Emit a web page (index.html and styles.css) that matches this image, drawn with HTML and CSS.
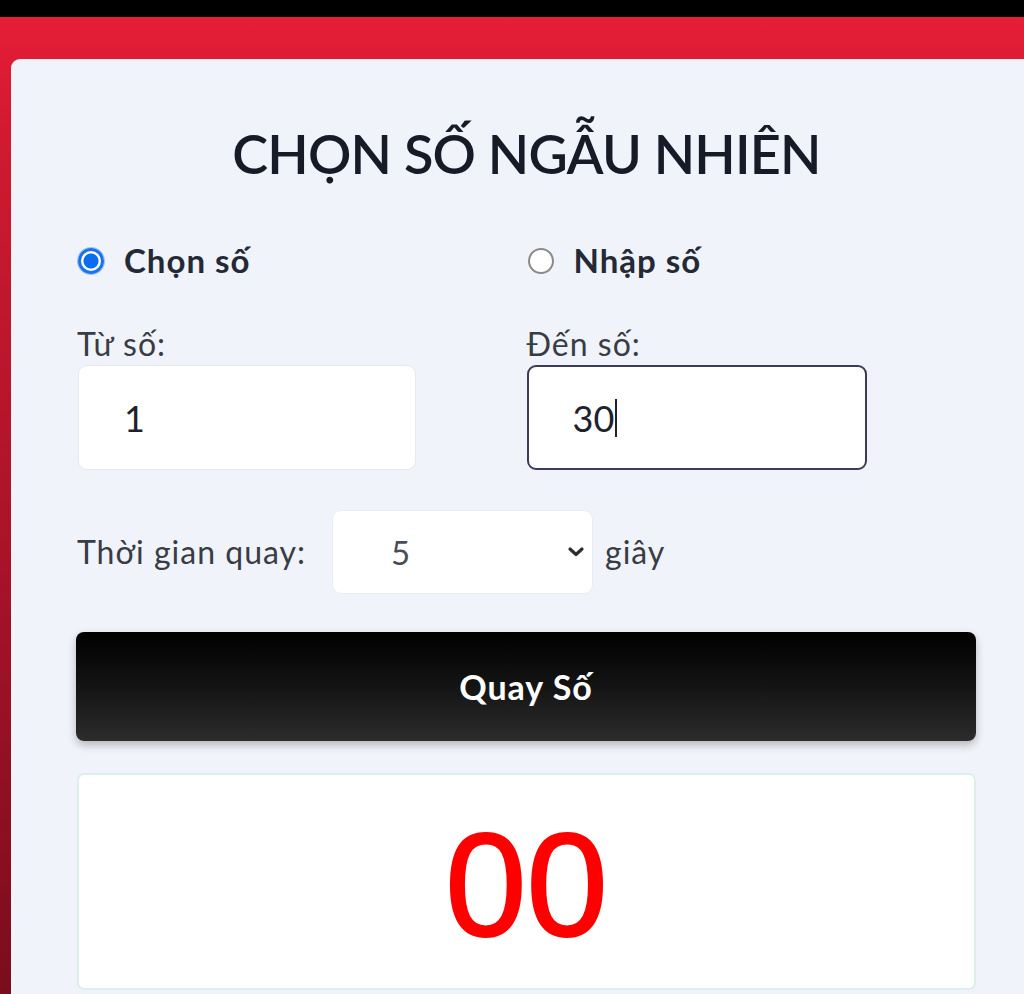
FILE: index.html
```html
<!DOCTYPE html>
<html lang="vi">
<head>
<meta charset="utf-8">
<title>Chọn số ngẫu nhiên</title>
<link rel="stylesheet" href="styles.css">
</head>
<body>
<div class="topbar"></div>
<div class="stage">
  <main class="card">
    <h1 class="title">CHỌN SỐ NGẪU NHIÊN</h1>
    <div class="grid">
      <label class="opt"><span class="radio checked"></span><span>Chọn số</span></label>
      <label class="opt"><span class="radio"></span><span>Nhập số</span></label>
      <div class="col">
        <div class="lbl">Từ số:</div>
        <div class="field">1</div>
      </div>
      <div class="col">
        <div class="lbl">Đến số:</div>
        <div class="field focused">30<span class="caret"></span></div>
      </div>
    </div>
    <div class="timerow">
      <span class="lbl">Thời gian quay:</span>
      <div class="select">
        <span>5</span>
        <svg class="chev" width="18" height="12" viewBox="0 0 18 12"><path d="M3 3l6 5.5 6-5.5" fill="none" stroke="#2e2e2e" stroke-width="3.2" stroke-linecap="round" stroke-linejoin="round"/></svg>
      </div>
      <span class="lbl">giây</span>
    </div>
    <button class="spin">Quay Số</button>
    <div class="result">00</div>
  </main>
</div>
</body>
</html>
```
FILE: styles.css
```css
html, body {
  margin: 0;
  padding: 0;
  overflow: hidden;
  height: 994px;
  background: #000;
}
body {
  font-family: Lato, "Noto Sans", sans-serif;
}
.topbar {
  height: 17px;
  background: #000;
}
.stage {
  height: 977px;
  padding: 42px 0 0 11px;
  box-sizing: border-box;
  background: linear-gradient(180deg, #e61d37 0%, #d01a30 12%, #a8132a 55%, #7a0d1c 100%);
  overflow: hidden;
}
.card {
  width: 1031px;
  height: 1000px;
  box-sizing: border-box;
  background: #f1f3fa;
  border-radius: 9px 0 0 0;
  padding: 62px 66px 0 66px;
}
.title {
  margin: 0;
  text-align: center;
  font-weight: 600;
  font-size: 54px;
  line-height: 65px;
  color: #161b27;
  letter-spacing: -0.8px;
}
.grid {
  display: grid;
  grid-template-columns: 1fr 1fr;
  margin-top: 56px;
  row-gap: 47px;
}
.opt {
  display: flex;
  align-items: center;
  gap: 20px;
  font-weight: 700;
  font-size: 33px;
  line-height: 37px;
  letter-spacing: 1px;
  color: #232a36;
  padding-left: 1px;
}
.radio {
  width: 26px;
  height: 26px;
  border-radius: 50%;
  box-sizing: border-box;
  border: 2px solid #8a8a8a;
  background: #fff;
}
.radio.checked {
  border: 3px solid #1a73e8;
  background: radial-gradient(circle, #0b6cf0 0 7px, #fff 8px);
  box-shadow: 0 0 0 1px #9cc3f5;
}
.col {
  display: flex;
  flex-direction: column;
}
.lbl {
  font-size: 32px;
  line-height: 36px;
  letter-spacing: 1px;
  color: #383c44;
}
.field {
  margin-top: 3px;
  width: 338px;
  height: 105px;
  box-sizing: border-box;
  background: #fff;
  border: 1px solid #e7e9f0;
  border-radius: 9px;
  padding-left: 45px;
  display: flex;
  align-items: center;
  font-size: 36px;
  color: #1d222c;
  margin-left: 1px;
}
.field.focused {
  width: 340px;
  border: 2px solid #3b3d58;
  padding-left: 44px;
  margin-left: 0;
}
.caret {
  width: 2px;
  height: 38px;
  background: #1d222c;
  margin-left: 1px;
}
.timerow {
  display: flex;
  align-items: center;
  margin-top: 40px;
}
.select {
  position: relative;
  width: 261px;
  height: 84px;
  box-sizing: border-box;
  margin: 0 12px 0 26px;
  background: #fff;
  border: 1px solid #eceef4;
  border-radius: 9px;
  display: flex;
  align-items: center;
  padding-left: 58px;
  font-size: 33px;
  color: #4a4d55;
}
.chev {
  position: absolute;
  right: 7px;
  top: 35px;
}
.spin {
  display: block;
  width: calc(100% + 1px);
  margin-left: -1px;
  height: 109px;
  margin-top: 38px;
  border: 0;
  border-radius: 8px;
  background: linear-gradient(180deg, #000 0%, #141414 50%, #2c2c2c 100%);
  box-shadow: 0 4px 8px rgba(0, 0, 0, 0.25);
  color: #fff;
  font-family: Lato, "Noto Sans", sans-serif;
  font-weight: 700;
  font-size: 34px;
  letter-spacing: 1px;
}
.result {
  margin-top: 32px;
  height: 217px;
  box-sizing: border-box;
  background: #fff;
  border: 2px solid #dcefe9;
  border-radius: 7px;
  text-align: center;
  padding-top: 38px;
  font-family: "Liberation Sans", Arial, sans-serif;
  font-size: 146px;
  line-height: 146px;
  color: #ff0000;
  -webkit-text-stroke: 2px #ff0000;
}
```
